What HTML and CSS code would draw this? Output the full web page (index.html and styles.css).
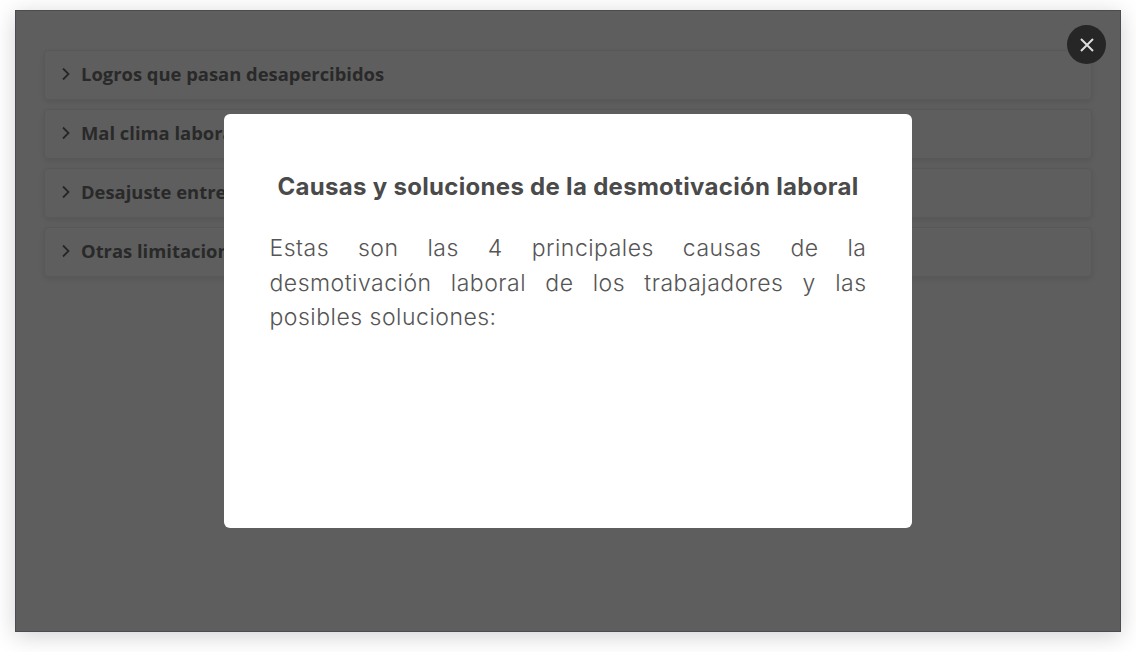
FILE: index.html
```html
<!DOCTYPE html>
<html lang="es">
<head>
    <meta charset="UTF-8">
    <meta name="viewport" content="width=device-width, initial-scale=1.0">
    <title>Desmotivación laboral</title>
    <link rel="stylesheet" href="styles.css">
</head>
<body>
    <div class="frame">
        <div class="accordion">
            <div class="item"><svg class="chevron" viewBox="0 0 10 14"><path d="M2 1.5 7.5 7 2 12.5"/></svg>Logros que pasan desapercibidos</div>
            <div class="item"><svg class="chevron" viewBox="0 0 10 14"><path d="M2 1.5 7.5 7 2 12.5"/></svg>Mal clima laboral</div>
            <div class="item"><svg class="chevron" viewBox="0 0 10 14"><path d="M2 1.5 7.5 7 2 12.5"/></svg>Desajuste entre</div>
            <div class="item"><svg class="chevron" viewBox="0 0 10 14"><path d="M2 1.5 7.5 7 2 12.5"/></svg>Otras limitaciones</div>
        </div>

        <div class="overlay">
            <button class="close" aria-label="Cerrar">
                <svg viewBox="0 0 14 14"><path d="M1 1 13 13M13 1 1 13"/></svg>
            </button>
            <div class="modal">
                <h2>Causas y soluciones de la desmotivación laboral</h2>
                <p>Estas son las 4 principales causas de la desmotivación laboral de los trabajadores y las posibles soluciones:</p>
            </div>
        </div>
    </div>
</body>
</html>
```
FILE: styles.css
```css
body {
    margin: 0;
    height: 652px;
    padding: 10px 15px 20px;
    box-sizing: border-box;
    background-color: #fff;
    overflow: hidden;
}

.frame {
    position: relative;
    height: 622px;
    padding: 40px 29px 0;
    box-sizing: border-box;
    background-color: #fff;
    box-shadow: 0 4px 22px rgba(0, 0, 0, 0.18);
}

.accordion {
    display: flex;
    flex-direction: column;
    gap: 9px;
}

.item {
    display: flex;
    align-items: center;
    height: 50px;
    padding: 0 0 4px 16px;
    box-sizing: border-box;
    border: 1px solid #eee;
    border-radius: 4px;
    background-color: #fff;
    box-shadow: 0 2px 6px rgba(0, 0, 0, 0.1);
    font-family: "Open Sans", sans-serif;
    font-size: 18.4px;
    font-weight: 700;
    color: #707070;
}

.chevron {
    width: 10px;
    height: 14px;
    margin: 2px 10px 0 0;
    fill: none;
    stroke: #666;
    stroke-width: 1.8;
}

.overlay {
    position: absolute;
    inset: 0;
    display: flex;
    align-items: flex-start;
    justify-content: center;
    padding-top: 104px;
    box-sizing: border-box;
    background-color: rgba(0, 0, 0, 0.63);
    box-shadow: inset 0 0 0 1px rgba(40, 40, 60, 0.35);
}

.close {
    position: absolute;
    top: 15px;
    right: 15px;
    display: flex;
    align-items: center;
    justify-content: center;
    width: 39px;
    height: 39px;
    padding: 0;
    border: none;
    border-radius: 50%;
    background-color: #262626;
}

.close svg {
    width: 14px;
    height: 14px;
    fill: none;
    stroke: #ddd;
    stroke-width: 2;
}

.modal {
    width: 688px;
    height: 414px;
    margin-left: -1px;
    padding: 58px 45px 0 46px;
    box-sizing: border-box;
    border-radius: 6px;
    background-color: #fff;
    font-family: "Inter", sans-serif;
    color: #555;
}

.modal h2 {
    margin: 0 0 29px;
    font-size: 24px;
    line-height: 30px;
    font-weight: 700;
    letter-spacing: 0.3px;
    text-align: center;
    color: #4a4a4a;
    white-space: nowrap;
}

.modal p {
    margin: 0;
    font-size: 23px;
    line-height: 34.5px;
    font-weight: 300;
    letter-spacing: 0.5px;
    text-align: justify;
}
```
